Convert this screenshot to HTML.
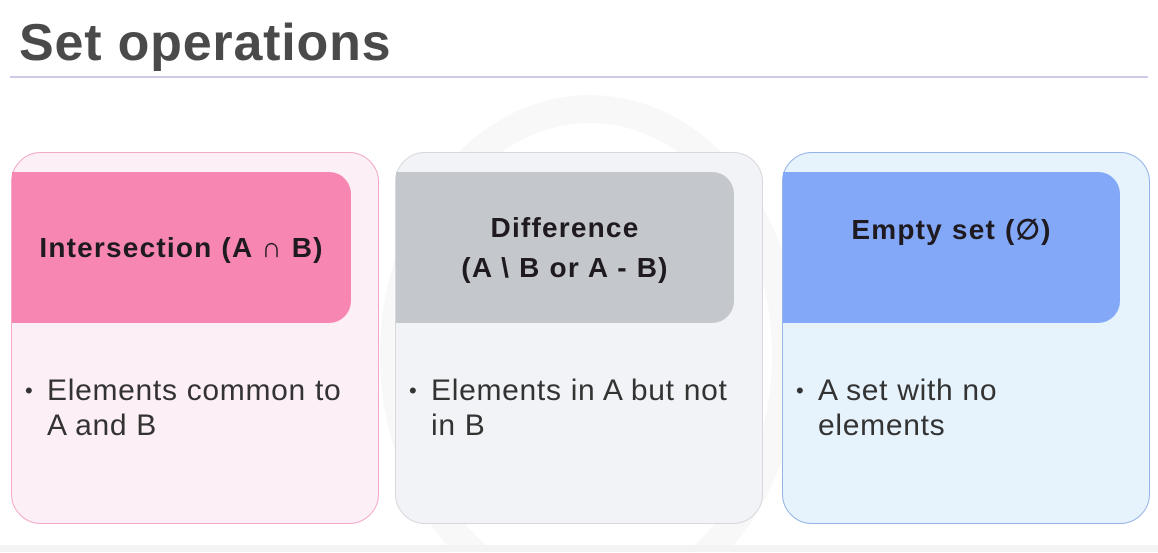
<!DOCTYPE html>
<html><head><meta charset="utf-8"><style>
html,body{margin:0;width:1158px;height:553px;overflow:hidden}
body{background:#fff;position:relative;font-family:"Liberation Sans",sans-serif}
h1{position:absolute;left:19px;top:13px;margin:0;font-size:52px;line-height:60px;font-weight:bold;color:#4a4a4a;letter-spacing:0.8px}
.line{position:absolute;left:10px;top:76px;width:1138px;height:2px;background:#cfcaea}
.card{position:absolute;top:152px;width:368px;height:372px;border-radius:30px;box-sizing:border-box;border:1.5px solid}
.hd{position:absolute;top:172px;height:151px;border-radius:0 22px 22px 0;display:flex;align-items:center;justify-content:center;text-align:center;font-weight:bold;font-size:28px;letter-spacing:1.2px;color:#1f1a1f;line-height:40px}
.tx{position:absolute;top:373px;font-size:30px;letter-spacing:0.7px;color:#333;line-height:35px}
.tx b{font-weight:normal;position:absolute;left:-22px;top:0;font-size:22px}
svg.bg{position:absolute;left:0;top:0;display:block}
.bottom{position:absolute;left:0;top:545px;width:1158px;height:7px;background:#f3f3f3}
</style></head><body>
<svg class="bg" width="1158" height="550" viewBox="0 0 1158 550"><ellipse cx="590" cy="355" rx="196" ry="246" fill="none" stroke="#f8f8f9" stroke-width="28"/></svg>
<h1>Set operations</h1>
<div class="line"></div>
<div class="card" style="left:11px;background:#fdeff6;border-color:#f3a8c9"></div>
<div class="card" style="left:395px;background:#f2f3f6;border-color:#d8d8dc"></div>
<div class="card" style="left:782px;background:#e6f3fd;border-color:#94b3e6"></div>
<div class="hd" style="left:12px;width:339px;background:#f787b2">Intersection (A ∩ B)</div>
<div class="hd" style="left:396px;width:338px;background:#c4c7cc;align-items:flex-start;padding-top:36px;height:115px">Difference<br>(A \ B or A - B)</div>
<div class="hd" style="left:783px;width:337px;background:#82a8f7;align-items:flex-start;padding-top:38px;height:113px">Empty set (∅)</div>
<div class="tx" style="left:47px"><b>•</b>Elements common to<br>A and B</div>
<div class="tx" style="left:431px"><b>•</b>Elements in A but not<br>in B</div>
<div class="tx" style="left:818px"><b>•</b>A set with no<br>elements</div>
<div class="bottom"></div>
</body></html>
